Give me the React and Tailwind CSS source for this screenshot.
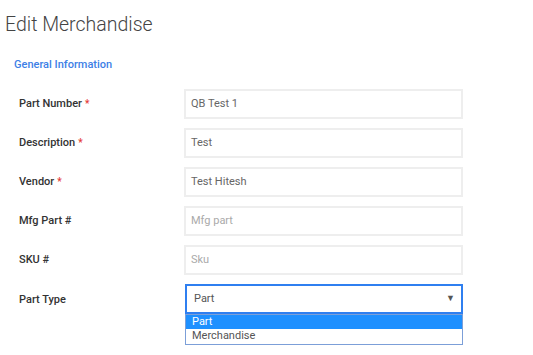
import React from "react";

const fields = [
  { label: "Part Number", required: true, value: "QB Test 1" },
  { label: "Description", required: true, value: "Test" },
  { label: "Vendor", required: true, value: "Test Hitesh" },
  { label: "Mfg Part #", placeholder: "Mfg part" },
  { label: "SKU #", placeholder: "Sku" },
];

export default function App() {
  return (
    <div className="w-[533px] h-[355px] bg-white overflow-hidden font-['Roboto',sans-serif]">
      <h1 className="pl-[5px] pt-[11px] text-[19.5px] leading-[28px] font-light text-[#444]">Edit Merchandise</h1>
      <div className="pl-[14px] pt-[19px] text-[11px] leading-[14px] font-medium text-[#3d7fe6]">General Information</div>

      <div className="mt-[17px] flex flex-col gap-[9px]">
        {fields.map((f) => (
          <div key={f.label} className="flex items-center">
            <label className="w-[184px] pl-[19px] text-[11px] font-medium text-[#333]">
              {f.label}
              {f.required && <span className="text-[#e53935] ml-[3px] text-[10px] align-top">*</span>}
            </label>
            <div className="w-[279px] h-[30px] border-2 border-[#eeeeee] flex items-center pl-[5px] text-[11px]">
              {f.value ? (
                <span className="text-[#666]">{f.value}</span>
              ) : (
                <span className="text-[#aaa]">{f.placeholder}</span>
              )}
            </div>
          </div>
        ))}

        <div className="flex items-start">
          <label className="w-[184px] pl-[19px] pt-[8px] text-[11px] font-medium text-[#333]">Part Type</label>
          <div className="relative ml-[1px]">
            <div className="w-[278px] h-[30px] border-2 border-[#2f7ff0] flex items-center justify-between pl-[7px] pr-[6px] text-[11px] text-[#555]">
              <span>Part</span>
              <span className="text-[9px] text-[#555]">▼</span>
            </div>
            <div className="w-[278px] border border-[#7c9fd8] text-[11px] leading-[14px]">
              <div className="bg-[#1e90ff] text-white pl-[6px]">Part</div>
              <div className="text-[#555] pl-[6px] pb-[1px]">Merchandise</div>
            </div>
          </div>
        </div>
      </div>
    </div>
  );
}
